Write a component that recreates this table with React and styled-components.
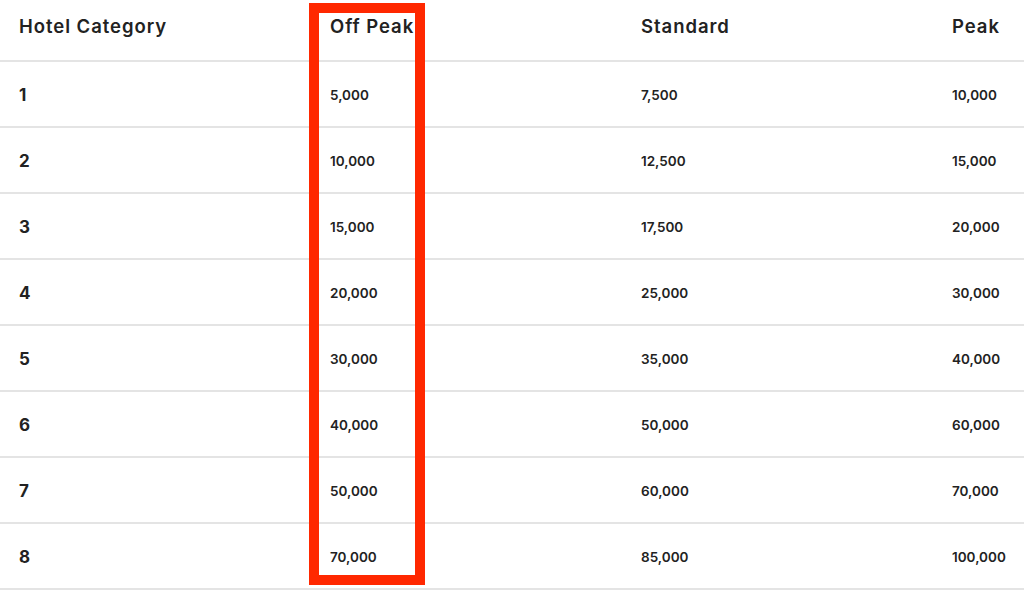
import React from "react";
import styled, { createGlobalStyle } from "styled-components";

const Global = createGlobalStyle`
  html, body { margin: 0; padding: 0; background: #fff; }
  body { font-family: Inter, "Open Sans", "Liberation Sans", sans-serif; color: #222; overflow: hidden; }
`;

const Wrap = styled.div`
  position: relative;
  width: 1024px;
  height: 591px;
  overflow: hidden;
`;

const Table = styled.div`
  display: flex;
  flex-direction: column;
  width: 1244px;
`;

const Row = styled.div`
  display: grid;
  grid-template-columns: repeat(4, 311px);
  height: ${(p) => (p.$head ? "62px" : "66px")};
  border-bottom: 2px solid #e4e4e4;
  box-sizing: border-box;
  align-items: ${(p) => (p.$head ? "start" : "center")};
`;

const HeadCell = styled.div`
  padding: 14px 0 0 19px;
  font-size: 18.5px;
  line-height: 24px;
  letter-spacing: 0.95px;
  font-weight: 600;
  color: #222;
`;

const CatCell = styled.div`
  padding-left: 19px;
  padding-top: 1px;
  font-size: 17px;
  font-weight: 700;
  color: #222;
`;

const NumCell = styled.div`
  padding-left: 19px;
  padding-top: 1px;
  font-size: 13.5px;
  font-weight: 600;
  color: #222;
`;

const Highlight = styled.div`
  position: absolute;
  left: 309px;
  top: 3px;
  width: 116px;
  height: 582px;
  border: 10px solid #ff2800;
  box-sizing: border-box;
  pointer-events: none;
`;

const data = [
  [1, "5,000", "7,500", "10,000"],
  [2, "10,000", "12,500", "15,000"],
  [3, "15,000", "17,500", "20,000"],
  [4, "20,000", "25,000", "30,000"],
  [5, "30,000", "35,000", "40,000"],
  [6, "40,000", "50,000", "60,000"],
  [7, "50,000", "60,000", "70,000"],
  [8, "70,000", "85,000", "100,000"],
];

export default function App() {
  return (
    <Wrap>
      <Global />
      <Table>
        <Row $head>
          <HeadCell>Hotel Category</HeadCell>
          <HeadCell>Off Peak</HeadCell>
          <HeadCell>Standard</HeadCell>
          <HeadCell>Peak</HeadCell>
        </Row>
        {data.map(([c, a, b, d]) => (
          <Row key={c}>
            <CatCell>{c}</CatCell>
            <NumCell>{a}</NumCell>
            <NumCell>{b}</NumCell>
            <NumCell>{d}</NumCell>
          </Row>
        ))}
      </Table>
      <Highlight />
    </Wrap>
  );
}
